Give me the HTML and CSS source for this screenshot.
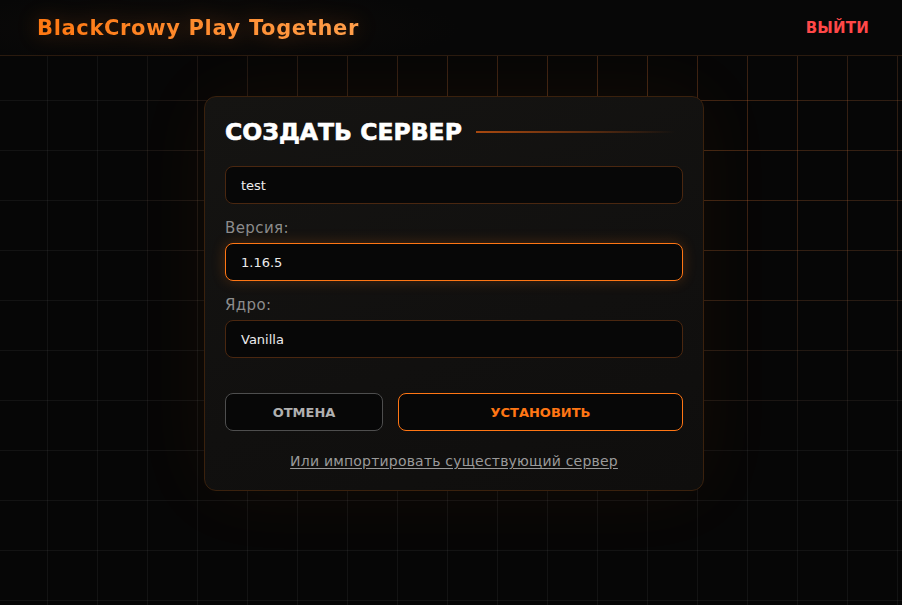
FILE: index.html
```html
<!DOCTYPE html>
<html lang="ru">
<head>
<meta charset="utf-8">
<title>BlackCrowy Play Together</title>
<link rel="stylesheet" href="styles.css">
</head>
<body>
<header class="topbar">
  <div class="brand">BlackCrowy Play Together</div>
  <a class="logout" href="#">ВЫЙТИ</a>
</header>
<main class="stage">
  <section class="card">
    <div class="card-head">
      <h1 class="card-title">СОЗДАТЬ СЕРВЕР</h1>
      <span class="card-rule"></span>
    </div>
    <div class="field field-first">
      <div class="input">test</div>
    </div>
    <div class="field">
      <label class="label">Версия:</label>
      <div class="input input-active">1.16.5</div>
    </div>
    <div class="field">
      <label class="label">Ядро:</label>
      <div class="input">Vanilla</div>
    </div>
    <div class="actions">
      <button class="btn btn-cancel">ОТМЕНА</button>
      <button class="btn btn-install">УСТАНОВИТЬ</button>
    </div>
    <div class="import"><a href="#" class="import-link">Или импортировать существующий сервер</a></div>
  </section>
</main>
</body>
</html>
```

FILE: styles.css
```css
* { box-sizing: border-box; }
html, body { height: 100%; }
body {
  margin: 0;
  background: #060606;
  font-family: "DejaVu Sans", "Noto Sans", sans-serif;
  color: #e6e6e6;
  overflow: hidden;
  position: relative;
}
body::before,
body::after {
  content: "";
  position: absolute;
  inset: 0;
  pointer-events: none;
  background-image:
    linear-gradient(to bottom, var(--g) 1px, transparent 1px),
    linear-gradient(to right, var(--g) 1px, transparent 1px);
  background-size: 50px 50px, 50px 50px;
  background-position: 0 0, 47px 0;
  z-index: 0;
}
body::before { --g: rgba(255, 255, 255, 0.05); }
body::after {
  --g: rgba(255, 110, 20, 0.24);
  -webkit-mask-image: radial-gradient(ellipse 520px 310px at 620px 150px, #000 0%, rgba(0,0,0,0.6) 45%, transparent 100%);
  mask-image: radial-gradient(ellipse 520px 310px at 620px 150px, #000 0%, rgba(0,0,0,0.6) 45%, transparent 100%);
}

.topbar {
  position: relative;
  z-index: 2;
  height: 56px;
  background: radial-gradient(ellipse 260px 40px at 200px 28px, #0e0b09 0%, #070707 100%);
  border-bottom: 1px solid #2a1a0e;
  display: flex;
  align-items: center;
  justify-content: space-between;
  padding: 0 33px 0 37px;
}
.brand {
  font-weight: 700;
  font-size: 21px;
  letter-spacing: 0.65px;
  background: linear-gradient(90deg, #ff7812, #ff9e4a);
  -webkit-background-clip: text;
  background-clip: text;
  color: transparent;
  filter: drop-shadow(0 0 10px rgba(255, 120, 20, 0.25));
  margin-top: 1px;
}
.logout {
  color: #ff4848;
  font-weight: 700;
  font-size: 15px;
  letter-spacing: 0.2px;
  text-decoration: none;
  margin-top: 1px;
}

.stage {
  position: relative;
  z-index: 1;
  display: flex;
  justify-content: center;
  padding: 40px 0 0 6px;
}
.card {
  width: 500px;
  background: linear-gradient(160deg, #151412 0%, #11100f 60%, #0f0e0d 100%);
  border: 1px solid #3a210d;
  border-radius: 12px;
  padding: 20px 20px 19px;
  box-shadow: 0 0 80px rgba(255, 120, 30, 0.06);
}
.card-head {
  display: flex;
  align-items: center;
  gap: 14px;
  height: 30px;
}
.card-title {
  margin: 0;
  font-size: 23.5px;
  font-weight: 800;
  color: #ffffff;
  -webkit-text-stroke: 0.6px #ffffff;
  white-space: nowrap;
  line-height: 30px;
}
.card-rule {
  flex: 1;
  height: 2px;
  margin-right: 8px;
  background: linear-gradient(90deg, #a8480f 0%, rgba(168, 72, 15, 0.5) 55%, rgba(168, 72, 15, 0) 100%);
}

.field { display: flex; flex-direction: column; }
.field-first { margin-top: 19px; }
.label {
  color: #8c8c8c;
  font-size: 15px;
  letter-spacing: 0.4px;
  line-height: 20px;
  margin: 14px 0 5px;
}
.input {
  height: 38px;
  border: 1px solid #4a2710;
  border-radius: 8px;
  background: #070707;
  padding: 0 15px;
  display: flex;
  align-items: center;
  font-size: 13px;
  color: #ececec;
}
.input-active {
  border-color: #ff7614;
  box-shadow: 0 0 14px rgba(255, 118, 20, 0.22);
}

.actions {
  display: grid;
  grid-template-columns: 158px 1fr;
  gap: 15px;
  margin-top: 35px;
}
.btn {
  height: 38px;
  border-radius: 8px;
  background: #070707;
  font-family: inherit;
  font-weight: 700;
  font-size: 13px;
  cursor: pointer;
}
.btn-cancel {
  border: 1px solid #4e4e4e;
  color: #b0b0b0;
}
.btn-install {
  border: 1px solid #ff7614;
  color: #ff7614;
}
.import {
  text-align: center;
  margin-top: 20px;
  line-height: 20px;
}
.import-link {
  color: #9a9a9a;
  font-size: 14px;
  letter-spacing: 0.2px;
  text-decoration: underline;
  text-underline-offset: 2px;
}
```
